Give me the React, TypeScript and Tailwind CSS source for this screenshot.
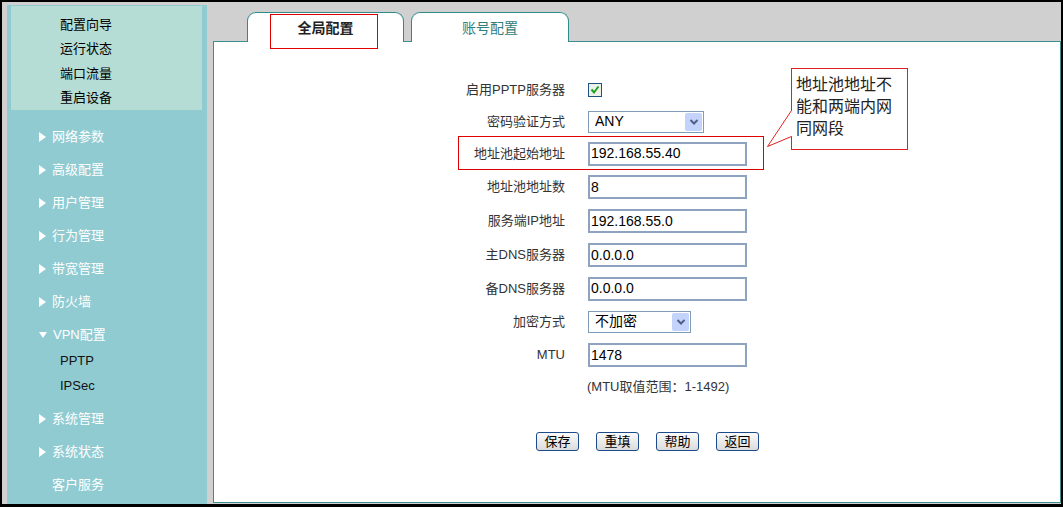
import { ReactNode } from 'react';

const topLinks = ['配置向导', '运行状态', '端口流量', '重启设备'];

const menuBefore = ['网络参数', '高级配置', '用户管理', '行为管理', '带宽管理', '防火墙'];
const menuAfter = ['系统管理', '系统状态'];

function Arrow({ down }: { down?: boolean }) {
  if (down) {
    return (
      <svg width="8" height="8" viewBox="0 0 8 8" className="shrink-0">
        <path d="M0 1 L8 1 L4 7 Z" fill="#ffffff" />
      </svg>
    );
  }
  return (
    <svg width="7" height="10" viewBox="0 0 7 10" className="shrink-0">
      <path d="M0 0 L7 5 L0 10 Z" fill="#ffffff" />
    </svg>
  );
}

function MenuItem({ label, down }: { label: string; down?: boolean }) {
  return (
    <div className="flex h-[33px] items-center pl-[32px] text-[13px] text-white">
      <Arrow down={down} />
      <span className="ml-[6px]">{label}</span>
    </div>
  );
}

function Sidebar() {
  return (
    <div className="ml-[5px] mt-[3px] flex w-[200px] flex-col bg-[#90cbd2]">
      <div className="ml-[4px] mt-[1px] flex h-[104px] w-[191px] flex-col bg-[#b6ddd5] pl-[49px] pt-[6px]">
        {topLinks.map(t => (
          <div key={t} className="flex h-[25px] items-center text-[13px] text-black">{t}</div>
        ))}
      </div>
      <div className="mt-[10px] flex flex-col">
        {menuBefore.map(m => <MenuItem key={m} label={m} />)}
        <MenuItem label="VPN配置" down />
        <div className="-mt-[3px] flex flex-col pl-[53px] text-[13px] font-normal text-[#111]">
          <div className="flex h-[25px] items-center">PPTP</div>
          <div className="flex h-[25px] items-center">IPSec</div>
        </div>
        <div className="mt-[4px] flex flex-col">
          {menuAfter.map(m => <MenuItem key={m} label={m} />)}
        </div>
        <div className="flex h-[33px] items-center pl-[45px] text-[13px] text-white">客户服务</div>
      </div>
    </div>
  );
}

function TextBox({ value }: { value: string }) {
  return (
    <div className="flex h-[24px] w-[159px] items-center border-2 border-[#8ea3c0] bg-white pl-[1px] text-[14px] text-black">
      {value}
    </div>
  );
}

function SelectBox({ value, width }: { value: string; width: string }) {
  return (
    <div className={`flex h-[22px] items-center border border-[#7f9db9] bg-white ${width}`}>
      <span className="flex-1 pl-[6px] text-[14px] text-black">{value}</span>
      <div className="m-[1px] flex h-[18px] w-[17px] items-center justify-center rounded-[2px] bg-[#c3d3fb]">
        <svg width="10" height="8" viewBox="0 0 10 8">
          <path d="M1.5 2 L5 5.5 L8.5 2" stroke="#4d6185" strokeWidth="2" fill="none" />
        </svg>
      </div>
    </div>
  );
}

function CheckBox() {
  return (
    <div className="flex h-[14px] w-[14px] items-center justify-center border border-[#1c5180] bg-[#eef0ea]">
      <svg width="10" height="10" viewBox="0 0 10 10">
        <path d="M1.5 4.5 L4 7.5 L8.5 1.5" stroke="#21a121" strokeWidth="2" fill="none" />
      </svg>
    </div>
  );
}

interface Row {
  label: string;
  h: string;
  control: ReactNode;
  mark?: boolean;
}

const rows: Row[] = [
  { label: '启用PPTP服务器', h: 'h-[32px]', control: <CheckBox /> },
  { label: '密码验证方式', h: 'h-[31px]', control: <SelectBox value="ANY" width="w-[116px]" /> },
  { label: '地址池起始地址', h: 'h-[33px]', control: <TextBox value="192.168.55.40" />, mark: true },
  { label: '地址池地址数', h: 'h-[34px]', control: <TextBox value="8" /> },
  { label: '服务端IP地址', h: 'h-[34px]', control: <TextBox value="192.168.55.0" /> },
  { label: '主DNS服务器', h: 'h-[34px]', control: <TextBox value="0.0.0.0" /> },
  { label: '备DNS服务器', h: 'h-[33px]', control: <TextBox value="0.0.0.0" /> },
  { label: '加密方式', h: 'h-[33px]', control: <SelectBox value="不加密" width="w-[103px]" /> },
  { label: 'MTU', h: 'h-[34px]', control: <TextBox value="1478" /> },
];

function Btn({ label }: { label: string }) {
  return (
    <button className="flex h-[19px] w-[43px] items-center justify-center rounded-[3px] border border-[#1d4a8a] bg-gradient-to-b from-[#fafafa] to-[#dcdcdc] text-[13px] leading-none text-black">
      {label}
    </button>
  );
}

function Callout() {
  return (
    <>
      <div className="absolute left-[577px] top-[26px] h-[82px] w-[117px] border border-[#e02020] bg-white pl-[4px] pt-[5px] text-[16px] leading-[22px] text-[#222]">
        地址池地址不能和两端内网同网段
      </div>
      <svg className="absolute left-[551px] top-[63px]" width="28" height="46" viewBox="0 0 28 46">
        <rect x="26" y="6" width="1" height="25" fill="#ffffff" />
        <path d="M26.5 5.5 L2.5 41.5 L26.5 31.5" stroke="#e02020" strokeWidth="1" fill="#ffffff" />
      </svg>
    </>
  );
}

function MainPanel() {
  return (
    <div className="flex w-[848px] flex-col">
      <div className="relative flex h-[39px] items-end pl-[34px]">
        <div className="relative z-10 -mb-px flex h-[30px] w-[157px] items-center justify-center rounded-t-[9px] border border-b-0 border-[#2f8a8a] bg-white pt-[1px] text-[14px] font-bold text-[#222]">
          全局配置
        </div>
        <div className="relative z-10 -mb-px ml-[7px] flex h-[30px] w-[158px] items-center justify-center rounded-t-[9px] border border-b-0 border-[#2f8a8a] bg-white pt-[1px] text-[14px] text-[#2f8080]">
          账号配置
        </div>
        <div className="absolute left-[57px] top-[12px] z-20 h-[35px] w-[108px] border border-[#e00000]" />
      </div>
      <div className="relative mb-px flex flex-1 flex-col border border-[#3d8f8f] bg-white pt-[32px]">
        {rows.map(r => (
          <div key={r.label} className={`relative flex items-center ${r.h}`}>
            <div className="w-[351px] text-right text-[13px] text-[#333]">{r.label}</div>
            <div className="ml-[23px]">{r.control}</div>
            {r.mark && <div className="absolute left-[244px] top-[-1px] h-[34px] w-[306px] border border-[#e00000]" />}
          </div>
        ))}
        <div className="flex h-[30px] items-center pl-[373px] text-[13px] text-[#333]">(MTU取值范围：1-1492)</div>
        <div className="mt-[30px] flex gap-[17px] pl-[322px]">
          <Btn label="保存" />
          <Btn label="重填" />
          <Btn label="帮助" />
          <Btn label="返回" />
        </div>
        <Callout />
      </div>
    </div>
  );
}

export default function App() {
  return (
    <div className="h-[507px] w-[1063px] bg-black pb-[3px] pl-[2px] pr-[2px] pt-[2px] font-['Liberation_Sans','Noto_Sans_CJK_SC',sans-serif]">
      <div className="flex h-full bg-[#d0d0d0]">
        <Sidebar />
        <div className="w-[6px]" />
        <MainPanel />
      </div>
    </div>
  );
}
